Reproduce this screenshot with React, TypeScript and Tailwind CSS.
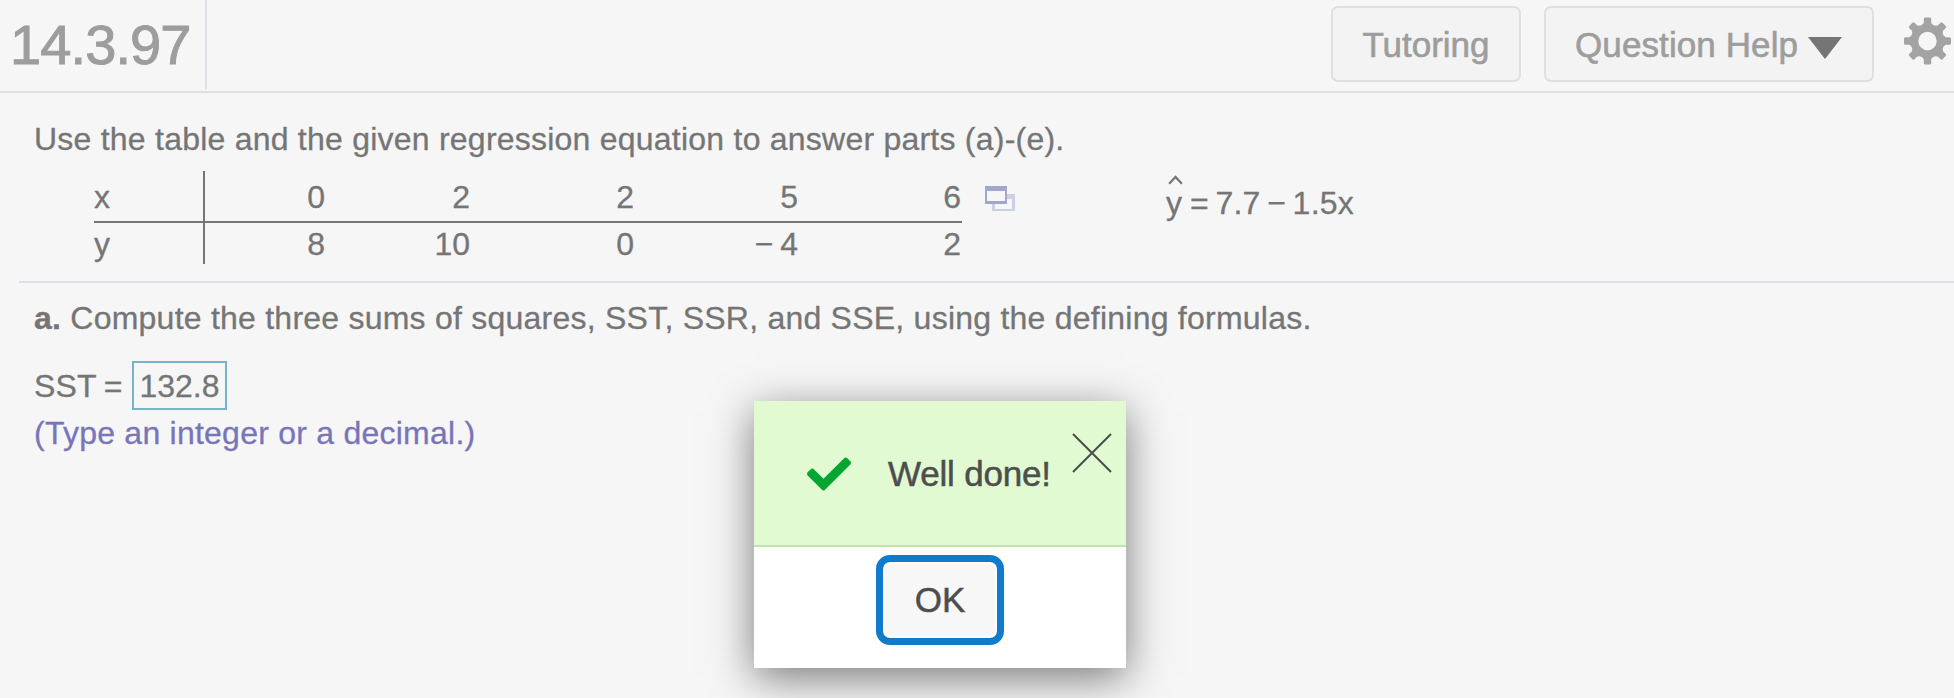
import React from "react";
import { FaCheck } from "react-icons/fa";

const columns = [
  { x: "0", y: "8", width: "w-[120px]" },
  { x: "2", y: "10", width: "w-[145px]" },
  { x: "2", y: "0", width: "w-[164px]" },
  { x: "5", y: "− 4", width: "w-[164px]" },
  { x: "6", y: "2", width: "w-[163px]" },
];

function Gear() {
  return (
    <svg className="mt-[17px] ml-[29px] h-[48px] w-[49px] shrink-0" viewBox="-24.5 -24.5 49 49" fill="#a3a3a3">
      <path
        fillRule="evenodd"
        d="M0-17.3a17.3 17.3 0 1 0 0 34.6a17.3 17.3 0 1 0 0-34.6zM0-9.4a9.4 9.4 0 1 1 0 18.8a9.4 9.4 0 1 1 0-18.8z"
      />
      {[0, 45, 90, 135, 180, 225, 270, 315].map((a) => (
        <path key={a} transform={`rotate(${a})`} d="M-6-16L-3.8-18.5V-22.6Q-3.8-24-2.2-24H2.2Q3.8-24 3.8-22.6V-18.5L6-16z" />
      ))}
    </svg>
  );
}

function Header() {
  return (
    <header className="flex h-[93px] shrink-0 border-b-2 border-[#dce0e4] text-[#9d9d9d] [-webkit-text-stroke:0.6px]">
      <h1 className="h-[89px] w-[207px] border-r-2 border-[#dce0e4] pt-[13px] pl-[10px] text-[56px] leading-[64px] tracking-[-0.9px] [-webkit-text-stroke:1px]">14.3.97</h1>
      <div className="ml-auto flex text-[35px] leading-[40px]">
        <button className="mt-[6px] flex h-[76px] w-[190px] items-center justify-center rounded-[7px] border-2 border-[#dfdfdf] bg-[#f3f3f3] pt-[2px]">
          Tutoring
        </button>
        <button className="mt-[6px] ml-[23px] flex h-[76px] w-[330px] items-center rounded-[7px] border-2 border-[#dfdfdf] bg-[#f3f3f3] pt-[2px] pl-[29px]">
          <span className="whitespace-nowrap tracking-[0.1px]">Question Help</span>
          <svg className="mt-[6px] ml-[10px] h-[22px] w-[34px] shrink-0" viewBox="0 0 34 22" fill="#757575">
            <path d="M0 0H34L17 22z" />
          </svg>
        </button>
        <Gear />
      </div>
      <div className="w-[2px] shrink-0" />
    </header>
  );
}

function DataTable() {
  return (
    <div className="mt-[9px] ml-[94px] flex h-[93px] w-[868px] flex-col">
      <div className="flex h-[52px] border-b-2 border-[#757575] leading-[36px]">
        <div className="w-[111px] border-r-2 border-[#757575] pt-[8px]">x</div>
        {columns.map((c, i) => (
          <div key={i} className={`${c.width} pt-[8px] text-right`}>{c.x}</div>
        ))}
      </div>
      <div className="flex h-[41px] leading-[36px]">
        <div className="w-[111px] border-r-2 border-[#757575] pt-[3px]">y</div>
        {columns.map((c, i) => (
          <div key={i} className={`${c.width} pt-[3px] text-right [word-spacing:-2px]`}>{c.y}</div>
        ))}
      </div>
    </div>
  );
}

function PopupIcon() {
  return (
    <svg className="mt-[24px] ml-[23px] h-[25px] w-[30px] shrink-0" viewBox="0 0 30 25" shapeRendering="crispEdges">
      <path fill="#cdd0e1" d="M7 8H30V25H7z" />
      <path fill="#f6f6f6" d="M10 13H27V23H10z" />
      <path fill="#a1a6cb" d="M0 0H22V18H0z" />
      <path fill="#f6f6f6" d="M2 5H20V15H2z" />
    </svg>
  );
}

function Equation() {
  return (
    <div className="mt-[12px] ml-[151px] flex leading-[36px]">
      <div className="flex w-[24px] flex-col">
        <svg className="mt-[1px] ml-[2px] h-[10px] w-[15px]" viewBox="0 0 16 10" fill="none" stroke="#757575" strokeWidth="2.4">
          <path d="M1.2 9L8 1.8L14.8 9" />
        </svg>
        <span>y</span>
      </div>
      <div className="mt-[11px] flex gap-[6.5px] whitespace-nowrap tracking-[0.24px]">
        <span>=</span>
        <span>7.7</span>
        <span>−</span>
        <span>1.5x</span>
      </div>
    </div>
  );
}

function Dialog() {
  return (
    <div role="dialog" className="absolute top-[401px] left-[754px] h-[267px] w-[372px] bg-white tracking-normal text-[#4d4d4d] shadow-[0_10px_40px_rgba(0,0,0,0.5)] [-webkit-text-stroke:0.5px]">
      <div className="flex h-[146px] border-b-2 border-[#c3e2ac] bg-[#e1fad1]">
        <FaCheck className="mt-[51px] ml-[53px] h-[44px] w-[44px] shrink-0 text-[#03a630]" />
        <span className="mt-[53px] ml-[37px] w-[164px] whitespace-nowrap text-[35px] leading-[40px] tracking-[-0.2px]">Well done!</span>
        <svg className="mt-[32px] ml-[20px] h-[40px] w-[40px] shrink-0" viewBox="0 0 40 40" stroke="#4d4d4d" strokeWidth="2">
          <path d="M1 1L39 39M39 1L1 39" />
        </svg>
      </div>
      <button className="mx-auto mt-[8px] flex h-[90px] w-[128px] items-center justify-center rounded-[14px] border-[7px] border-[#107acb] bg-[#f7f7f7] text-[35px] leading-[40px] shadow-[inset_0_0_0_2px_#fdfdfd]">
        OK
      </button>
    </div>
  );
}

export default function App() {
  return (
    <main className="relative flex h-[698px] w-[1954px] flex-col overflow-hidden bg-[#f6f6f6] font-['Liberation_Sans',Arial,sans-serif] text-[32px] text-[#757575] [-webkit-text-stroke:0.3px]">
      <Header />
      <p className="mt-[28px] ml-[34px] h-[41px] whitespace-nowrap leading-[36px] tracking-[0.23px]">
        Use the table and the given regression equation to answer parts (a)-(e).
      </p>
      <div className="flex h-[102px]">
        <DataTable />
        <PopupIcon />
        <Equation />
      </div>
      <div className="mt-[17px] ml-[19px] h-[2px] bg-[#dce0e4]" />
      <p className="mt-[17px] ml-[34px] whitespace-nowrap leading-[36px] tracking-[0.235px]">
        <b>a.</b> Compute the three sums of squares, SST, SSR, and SSE, using the defining formulas.
      </p>
      <div className="mt-[25px] ml-[34px] flex h-[49px]">
        <span className="mt-[7px] flex w-[98px] gap-[7px] whitespace-nowrap leading-[36px] tracking-[0.2px]">
          <span>SST</span>
          <span>=</span>
        </span>
        <span className="w-[95px] border-2 border-[#76b5c5] pt-[5px] text-center leading-[36px]">132.8</span>
      </div>
      <p className="mt-[5px] ml-[34px] whitespace-nowrap leading-[36px] tracking-[0.24px] text-[#7875b9]">(Type an integer or a decimal.)</p>
      <Dialog />
    </main>
  );
}
